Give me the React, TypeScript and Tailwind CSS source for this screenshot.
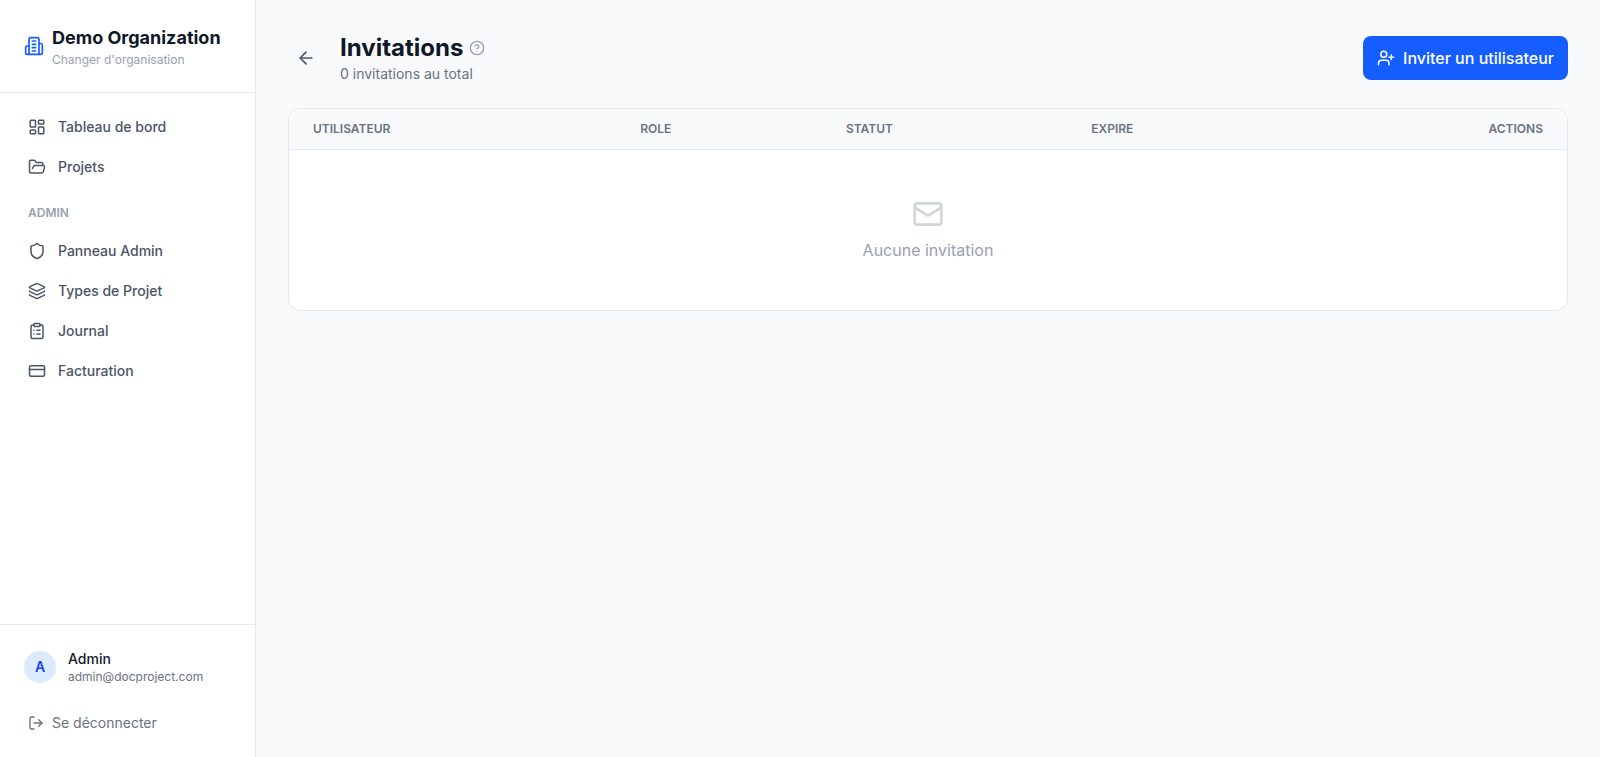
import {
  ArrowLeft,
  CircleHelp,
  ClipboardList,
  CreditCard,
  FolderOpen,
  Layers,
  LayoutDashboard,
  LogOut,
  Mail,
  Shield,
  UserPlus,
  type LucideIcon,
} from "lucide-react";

interface NavItem {
  label: string;
  href: string;
  icon: LucideIcon;
}

const mainNav: NavItem[] = [
  { label: "Tableau de bord", href: "#dashboard", icon: LayoutDashboard },
  { label: "Projets", href: "#projects", icon: FolderOpen },
];

const adminNav: NavItem[] = [
  { label: "Panneau Admin", href: "#admin", icon: Shield },
  { label: "Types de Projet", href: "#project-types", icon: Layers },
  { label: "Journal", href: "#journal", icon: ClipboardList },
  { label: "Facturation", href: "#billing", icon: CreditCard },
];

function BuildingIcon() {
  return (
    <svg
      viewBox="0 0 24 24"
      fill="none"
      stroke="currentColor"
      strokeWidth={2}
      strokeLinecap="round"
      strokeLinejoin="round"
      aria-hidden="true"
      className="w-5 h-5 shrink-0 text-blue-600"
    >
      <path d="M6 22V4a2 2 0 0 1 2-2h8a2 2 0 0 1 2 2v18Z" />
      <path d="M6 12H4a2 2 0 0 0-2 2v6a2 2 0 0 0 2 2h2" />
      <path d="M18 9h2a2 2 0 0 1 2 2v9a2 2 0 0 1-2 2h-2" />
      <path d="M10 6h4" />
      <path d="M10 10h4" />
      <path d="M10 14h4" />
      <path d="M10 18h4" />
    </svg>
  );
}

function NavLink({ label, href, icon: Icon }: NavItem) {
  return (
    <a
      href={href}
      className="flex items-center gap-3 px-3 py-2 rounded-lg text-sm font-medium text-gray-600 hover:bg-gray-50"
    >
      <Icon size={18} />
      {label}
    </a>
  );
}

function Sidebar() {
  return (
    <aside className="w-64 shrink-0 flex flex-col bg-white border-r border-gray-200">
      <div className="p-6 border-b border-gray-200">
        <a href="#organizations" className="flex items-center gap-2">
          <BuildingIcon />
          <div>
            <h1 className="text-lg font-bold text-gray-900">Demo Organization</h1>
            <p className="text-xs text-gray-400">Changer d'organisation</p>
          </div>
        </a>
      </div>

      <nav className="flex-1 p-4 space-y-1">
        {mainNav.map((item) => (
          <NavLink key={item.href} {...item} />
        ))}
        <p className="px-3 pt-4 pb-2 text-xs font-semibold text-gray-400 uppercase">Admin</p>
        {adminNav.map((item) => (
          <NavLink key={item.href} {...item} />
        ))}
      </nav>

      <div className="p-4 border-t border-gray-200">
        <div className="flex items-center gap-3 px-2 py-2 mb-3">
          <div className="w-8 h-8 rounded-full bg-blue-100 flex items-center justify-center text-sm font-semibold text-blue-700">
            A
          </div>
          <div>
            <p className="text-sm font-medium text-gray-900">Admin</p>
            <p className="text-xs text-gray-500">admin@docproject.com</p>
          </div>
        </div>
        <button
          type="button"
          className="w-full flex items-center gap-2 px-3 py-2 rounded-lg text-sm text-gray-500 hover:bg-gray-50"
        >
          <LogOut size={16} />
          Se déconnecter
        </button>
      </div>
    </aside>
  );
}

function InvitationsTable() {
  return (
    <div className="bg-white rounded-xl border border-gray-200 overflow-hidden">
      <table className="w-full">
        <thead className="bg-gray-50 border-b border-gray-200">
          <tr className="text-left text-xs text-gray-500 uppercase">
            <th className="w-[25.6%] px-6 py-3 font-semibold">Utilisateur</th>
            <th className="w-[16.1%] px-6 py-3 font-semibold">Role</th>
            <th className="w-[19.2%] px-6 py-3 font-semibold">Statut</th>
            <th className="px-6 py-3 font-semibold">Expire</th>
            <th className="px-6 py-3 font-semibold text-right">Actions</th>
          </tr>
        </thead>
        <tbody>
          <tr>
            <td colSpan={5} className="px-6 py-12 text-center text-gray-400">
              <Mail size={32} className="mx-auto mb-2 text-gray-300" />
              Aucune invitation
            </td>
          </tr>
        </tbody>
      </table>
    </div>
  );
}

export default function App() {
  return (
    <div className="flex min-h-screen bg-gray-50 font-['Inter',sans-serif]">
      <Sidebar />
      <main className="flex-1 p-8">
        <div className="flex items-center justify-between mb-6">
          <div className="flex items-center gap-4">
            <button type="button" aria-label="Retour" className="p-2 rounded-lg text-gray-600 hover:bg-gray-100">
              <ArrowLeft size={20} />
            </button>
            <div>
              <div className="flex items-center gap-1.5">
                <h2 className="text-2xl font-bold text-gray-900">Invitations</h2>
                <button type="button" aria-label="Aide" className="text-gray-400">
                  <CircleHelp size={16} />
                </button>
              </div>
              <p className="text-sm text-gray-500">0 invitations au total</p>
            </div>
          </div>
          <button
            type="button"
            className="flex items-center gap-2 px-3.5 py-2.5 rounded-lg bg-blue-600 font-medium text-white hover:bg-blue-700"
          >
            <UserPlus size={18} />
            Inviter un utilisateur
          </button>
        </div>
        <InvitationsTable />
      </main>
    </div>
  );
}
